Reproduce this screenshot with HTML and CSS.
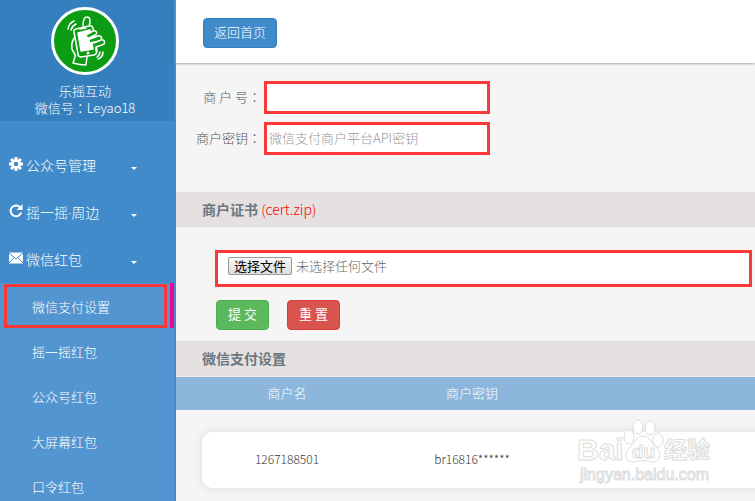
FILE: index.html
```html
<!DOCTYPE html>
<html lang="zh-CN">
<head>
<meta charset="utf-8">
<title>微信支付设置</title>
<link rel="stylesheet" href="styles.css">
</head>
<body>
<div class="app">
  <aside class="sidebar">
    <div class="profile">
      <svg class="avatar" viewBox="0 0 68 68" aria-hidden="true">
        <circle cx="34" cy="34" r="32.5" fill="#0c9c14" stroke="#fff" stroke-width="3"/>
        <g fill="none" stroke="#fff" stroke-width="1.500" stroke-linecap="round" stroke-linejoin="round">
          <path d="M32 19c0-5 1-9 4-9s4 3 2 10"/>
          <path d="M25 29c-4 4-5 8-4 13 1 4 4 4 3 8l-2 6q7 2 13 2l1-8"/>
          <path d="M25 22l13-3q3-1 4 2l4 23q0 3-3 4l-13 2q-3 0-3-3l-4-22q-1-2 2-3z" fill="#0c9c14"/>
          <path d="M27 26l12-3 3 19-12 2z" fill="#fff"/>
          <path d="M29 22l6-1"/>
          <path d="M35 28l7-4c4-1 5 3 2 4l-6 3M39 32l8-3c4-1 5 4 1 5l-9 2M43 36l7-3c4-1 5 4 1 5l-6 2v4" fill="#0c9c14"/>
          <path d="M17 22q1-6 6-8M20 23q1-4 5-6M52 45q0 5-5 7M49 45q0 3-3 5"/>
        </g>
        <circle cx="37" cy="46" r="1.500" fill="#fff"/>
      </svg>
      <div>乐摇互动</div>
      <div>微信号<span class="colon" lang="zh-TW">：</span>Leyao18</div>
    </div>
    <nav class="menu">
      <a class="menu-item" href="#">
        <svg class="icon" viewBox="0 0 14 14" aria-hidden="true"><g fill="#fff"><circle cx="7" cy="7" r="5"/><path d="M5.500 0h3v14h-3zM0 5.500h14v3H0zM1 3l2-2 10 10-2 2zM11 1l2 2L3 13l-2-2z"/></g><circle cx="7" cy="7" r="2.300" fill="#428bca"/></svg>
        <span>公众号管理</span><i class="caret"></i>
      </a>
      <a class="menu-item" href="#">
        <svg class="icon" viewBox="0 0 14 14" aria-hidden="true"><path d="M11 3.200A5.400 5.400 0 1 0 12.200 8.500" fill="none" stroke="#fff" stroke-width="2"/><path d="M13.500 0v6h-6z" fill="#fff"/></svg>
        <span>摇一摇<span class="dot">·</span>周边</span><i class="caret"></i>
      </a>
      <a class="menu-item" href="#">
        <svg class="icon" viewBox="0 0 14 14" aria-hidden="true"><path d="M0 1.500h14v11H0z" fill="#fff"/><path d="M0 2l7 6 7-6M0 12l5-5.500M14 12L9 6.500" fill="none" stroke="#428bca"/></svg>
        <span>微信红包</span><i class="caret"></i>
      </a>
      <div class="submenu">
        <a class="sub-item active" href="#">微信支付设置</a>
        <a class="sub-item" href="#">摇一摇红包</a>
        <a class="sub-item" href="#">公众号红包</a>
        <a class="sub-item" href="#">大屏幕红包</a>
        <a class="sub-item" href="#">口令红包</a>
      </div>
    </nav>
  </aside>
  <main class="content">
    <header class="topbar"><button class="btn primary" type="button">返回首页</button></header>
    <form>
      <div class="fields">
        <label for="mch">商 户 号<span class="colon" lang="zh-TW">：</span></label><input class="field" id="mch" type="text">
        <label for="key">商户密钥<span class="colon" lang="zh-TW">：</span></label><input class="field" id="key" type="text" placeholder="微信支付商户平台API密钥">
      </div>
      <h2 class="section">商户证书 <span class="note">(cert.zip)</span></h2>
      <div class="upload">
        <label class="file-row" for="cert"><span class="file-button">选择文件</span><span>未选择任何文件</span></label>
        <input class="file-input" id="cert" type="file">
        <div class="actions">
          <button class="btn success" type="submit">提 交</button>
          <button class="btn danger" type="reset">重 置</button>
        </div>
      </div>
    </form>
    <h2 class="section">微信支付设置</h2>
    <table class="accounts">
      <thead><tr><th>商户名</th><th>商户密钥</th></tr></thead>
      <tbody><tr><td>1267188501</td><td>br16816******</td></tr></tbody>
    </table>
  </main>
  <svg class="watermark" viewBox="0 0 140 68" aria-hidden="true">
    <g class="mark">
      <text x="2" y="42" font-size="30">Bai</text>
      <path d="M68 18c7 0 8 7 14 12 6 6 2 15-5 14-6-2-12-2-18 0-8 1-11-8-5-14 6-5 7-12 14-12z"/>
      <ellipse cx="54" cy="19" rx="5" ry="7"/>
      <ellipse cx="63" cy="9" rx="5" ry="7"/>
      <ellipse cx="75" cy="10" rx="5" ry="7"/>
      <ellipse cx="83" cy="22" rx="5" ry="7"/>
      <text x="57" y="40" font-size="19">du</text>
      <text class="cjk" x="89" y="40" font-size="23">经验</text>
      <text class="url" x="5" y="62" font-size="16">jingyan.baidu.com</text>
    </g>
  </svg>
</div>
</body>
</html>
```
FILE: styles.css
```css
* { box-sizing: border-box; }
body {
  margin: 0;
  background: #f5f5f5;
  color: #555;
  font: 300 13px/17px "Noto Sans CJK SC", sans-serif;
}
a { color: inherit; text-decoration: none; }
.colon { font-family: "Noto Sans CJK TC", sans-serif; }
.dot { font-family: "Open Sans", sans-serif; }
.app {
  position: relative;
  display: flex;
  height: 100vh;
  overflow: hidden;
}
.sidebar {
  flex: none;
  width: 176px;
  padding-right: 2px;
  background: #428bca;
  color: #fff;
}
.profile {
  height: 121px;
  padding: 7px 4px 0 0;
  background: #367fbe;
  text-align: center;
}
.avatar {
  display: block;
  width: 68px;
  height: 68px;
  margin: 0 auto 7px;
}
.menu { padding-top: 21px; }
.menu-item {
  display: flex;
  align-items: center;
  gap: 3px;
  height: 47px;
  padding: 0 37px 0 9px;
  font-size: 14px;
}
.icon { width: 14px; height: 14px; margin-bottom: 3px; }
.caret {
  margin: 6px 0 0 auto;
  border: 3px solid transparent;
  border-top-color: #fff;
  border-bottom: 0;
}
.submenu { background: #5295d0; }
.sub-item {
  display: block;
  height: 45px;
  padding-left: 32px;
  line-height: 47px;
}
.active {
  position: relative;
  border-right: 4px solid #f0058f;
}
.active::after {
  content: "";
  position: absolute;
  inset: 1px 3px 0 4px;
  border: 3px solid #fb3737;
}
.content { flex: 1; min-width: 0; }
.topbar {
  height: 63px;
  padding: 18px 27px;
  background: #fff;
  box-shadow: 0 1px 2px #aaa;
}
.btn {
  height: 30px;
  padding: 0 10px 3px;
  border: 1px solid;
  border-radius: 4px;
  color: #fff;
  font: inherit;
}
.primary { background: #428bca; border-color: #357ebd; }
.success { background: #5cb85c; border-color: #4cae4c; }
.danger { background: #d9534f; border-color: #d43f3a; }
.fields {
  display: grid;
  grid-template-columns: 88px 226px;
  gap: 8px 0;
  align-items: center;
  padding: 18px 0 37px;
}
.fields label { padding: 0 3px 3px 0; text-align: right; }
.field {
  width: 100%;
  height: 33px;
  padding: 0 2px 3px;
  border: 3px solid #fb3737;
  background: #fff;
  color: #555;
  font: inherit;
}
.field::placeholder { color: #999; opacity: 1; }
.section {
  height: 36px;
  margin: 0;
  padding-left: 26px;
  border-bottom: 1px solid #f0eeee;
  background: #e5e1e0;
  color: #6b7680;
  font-size: 14px;
  font-weight: 700;
  line-height: 34px;
}
.note { color: #f00; font-size: 14px; font-weight: 300; }
.upload { padding: 22px 3px 11px 39px; }
.file-row {
  display: flex;
  gap: 4px;
  height: 37px;
  padding: 4px 10px;
  border: 3px solid #fb3737;
  background: #fff;
  color: #666;
}
.file-button {
  height: 18px;
  padding: 0 5px;
  border: 1px solid #999;
  border-radius: 2px;
  background: linear-gradient(#f8f8f8, #ddd);
  color: #000;
  font-weight: 400;
  line-height: 16px;
}
.file-input {
  position: absolute;
  width: 1px;
  height: 1px;
  opacity: 0;
}
.actions { display: flex; gap: 18px; padding: 13px 0 0 1px; }
.actions .btn { width: 53px; font-weight: 400; }
.accounts, .accounts thead, .accounts tbody { display: block; }
.accounts tr {
  display: grid;
  grid-template-columns: 170px 200px;
  align-items: center;
}
.accounts th, .accounts td { padding: 0 0 3px; text-align: center; }
.accounts thead tr {
  height: 33px;
  padding-left: 26px;
  background: #8db6dd;
  color: #fff;
}
.accounts th { font-weight: 300; }
.accounts tbody tr {
  height: 56px;
  margin: 22px -20px 0 26px;
  border-radius: 10px;
  background: #fff;
  box-shadow: 0 0 10px #ddd;
  color: #333;
  font-size: 12px;
}
.watermark {
  position: absolute;
  right: 40px;
  bottom: 15px;
  width: 140px;
  height: 68px;
}
.mark {
  fill: #fff;
  stroke: #ddd;
  stroke-width: 1px;
  font-family: "Liberation Sans", sans-serif;
  font-weight: 700;
}
.cjk { font-family: "Noto Sans CJK SC", sans-serif; }
.url { font-weight: 400; }
```
